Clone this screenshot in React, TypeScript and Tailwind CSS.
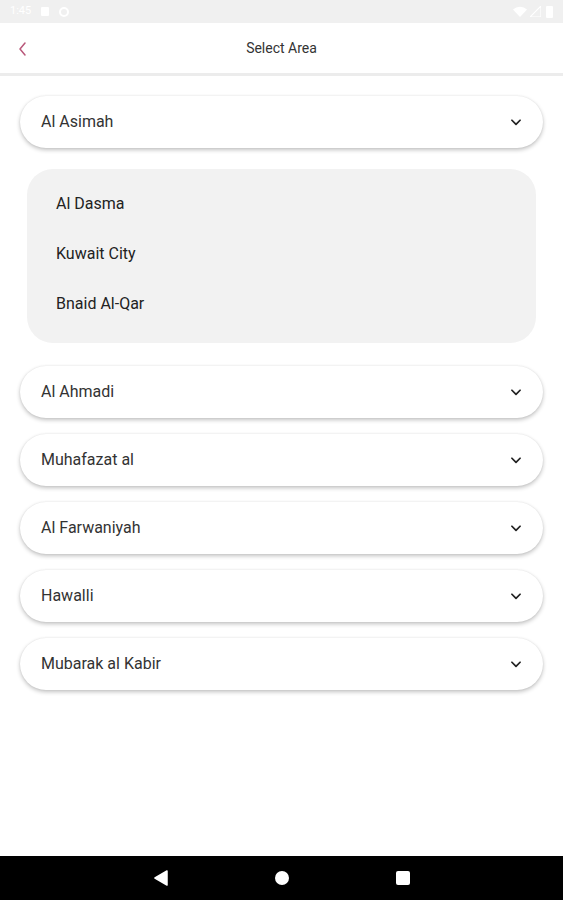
import React from "react";

const font = { fontFamily: "Roboto, 'Noto Sans', sans-serif" };

function Chevron() {
  return (
    <svg width="14" height="14" viewBox="0 0 24 24" fill="none" stroke="#222" strokeWidth="3" strokeLinecap="round" strokeLinejoin="round">
      <path d="M5 9l7 7 7-7" />
    </svg>
  );
}

function Card({ label }: { label: string }) {
  return (
    <div className="flex h-[52px] items-center justify-between rounded-full bg-white pl-[21px] pr-[20px] shadow-[0_2px_4px_rgba(0,0,0,0.24),0_0_2px_rgba(0,0,0,0.08)]">
      <span className="text-[16px] text-[#333]">{label}</span>
      <Chevron />
    </div>
  );
}

export default function App() {
  const subs = ["Al Dasma", "Kuwait City", "Bnaid Al-Qar"];
  const rest = ["Al Ahmadi", "Muhafazat al", "Al Farwaniyah", "Hawalli", "Mubarak al Kabir"];
  return (
    <div className="flex h-[900px] w-[563px] flex-col bg-white" style={font}>
      <div className="flex h-[23px] items-center justify-between bg-[#f0f0f0] px-[10px]">
        <div className="flex items-center gap-[10px]">
          <span className="text-[11px] text-white">1:45</span>
          <div className="h-[9px] w-[8px] rounded-[1px] bg-white" />
          <div className="h-[10px] w-[10px] rounded-full border-2 border-white" />
        </div>
        <div className="flex items-center gap-[3px]">
          <svg width="14" height="12" viewBox="0 0 14 12"><path d="M7 11L0 3.5A10 10 0 0 1 14 3.5Z" fill="#fff" /></svg>
          <svg width="11" height="11" viewBox="0 0 11 11"><path d="M11 0V11H0Z" fill="none" stroke="#fff" strokeWidth="1.2" /></svg>
          <div className="ml-[2px] h-[12px] w-[7px] rounded-[1px] bg-white" />
        </div>
      </div>
      <div className="relative flex h-[53px] items-center justify-center border-b-[3px] border-[#ececec]">
        <svg className="absolute left-[17px] top-[18px]" width="12" height="16" viewBox="0 0 12 16" fill="none" stroke="#b9587a" strokeWidth="1.5" strokeLinecap="round" strokeLinejoin="round">
          <path d="M8 2L3 8l5 6" />
        </svg>
        <span className="text-[14px] text-[#333]">Select Area</span>
      </div>
      <div className="flex flex-col px-[20px] pt-[20px]">
        <Card label="Al Asimah" />
        <div className="mx-[7px] mt-[21px] mb-[23px] flex flex-col rounded-[26px] bg-[#f2f2f2] pl-[29px] pt-[10px] pb-[14px]">
          {subs.map((s) => (
            <div key={s} className="flex h-[50px] items-center text-[16px] text-[#222]">{s}</div>
          ))}
        </div>
        <div className="flex flex-col gap-[16px]">
          {rest.map((r) => (
            <Card key={r} label={r} />
          ))}
        </div>
      </div>
      <div className="flex-1" />
      <div className="flex h-[44px] items-center justify-center bg-black">
        <div className="flex w-[256px] items-center justify-between">
          <svg width="14" height="16" viewBox="0 0 14 16"><path d="M13 1L1 8l12 7Z" fill="#fff" stroke="#fff" strokeLinejoin="round" strokeWidth="1.5" /></svg>
          <div className="h-[14px] w-[14px] rounded-full bg-white" />
          <div className="h-[14px] w-[14px] rounded-[2px] bg-white" />
        </div>
      </div>
    </div>
  );
}
